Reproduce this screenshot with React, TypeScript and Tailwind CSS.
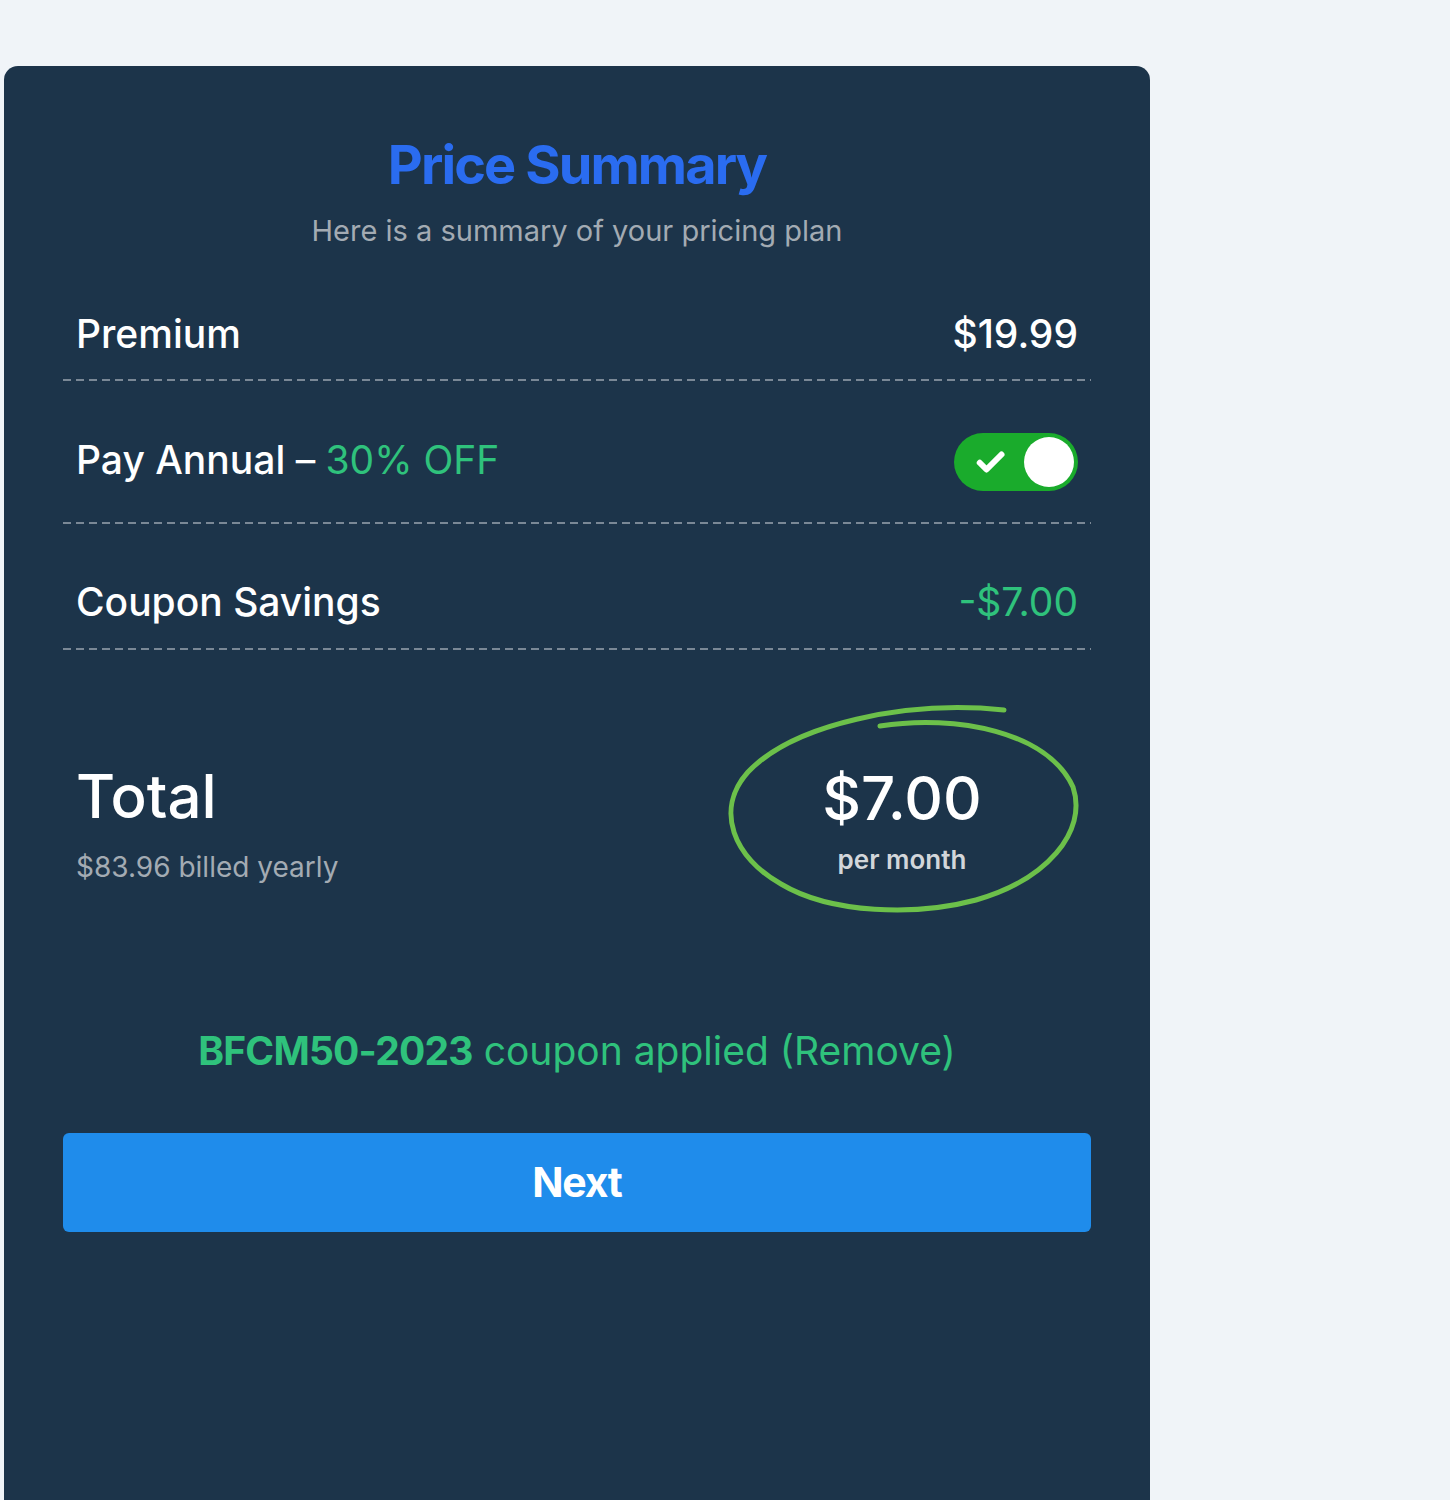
import React from "react";

function Divider() {
  return (
    <div className="h-[2px] w-full bg-[repeating-linear-gradient(90deg,#7a8896_0px,#7a8896_8px,transparent_8px,transparent_13px)]" />
  );
}

export default function App() {
  return (
    <div
      className="h-[1500px] w-full overflow-hidden bg-[#f0f4f8] pl-[4px] pt-[66px]"
      style={{ fontFamily: "Inter, 'Noto Sans', sans-serif" }}
    >
      <div className="flex h-[1460px] w-[1146px] flex-col rounded-[14px] bg-[#1c344a] px-[59px] pt-[69px]">
        <h1 className="text-center text-[54px] font-bold leading-[60px] tracking-[-0.035em] text-[#2a6cf0]">
          Price Summary
        </h1>
        <p className="mt-[18px] text-center text-[29px] leading-[36px] text-[#a3abb3]">
          Here is a summary of your pricing plan
        </p>

        <div className="flex items-center justify-between px-[13px] pb-[23px] pt-[63px] text-[39px] font-medium leading-[44px] text-white">
          <span>Premium</span>
          <span>$19.99</span>
        </div>
        <Divider />

        <div className="flex items-center justify-between px-[13px] pb-[31px] pt-[52px] text-[39px] font-medium leading-[44px] text-white">
          <span className="mt-[-4px]">
            Pay Annual <span className="font-normal">–</span>{" "}
            <span className="font-normal text-[#2fc27c]">30% OFF</span>
          </span>
          <div className="flex h-[58px] w-[124px] items-center justify-between rounded-full bg-[#1aab2c] pl-[19px] pr-[4px]">
            <svg width="36" height="36" viewBox="0 0 24 24" fill="none">
              <path
                d="M4.5 12.5l4.5 4.5 10-10"
                stroke="white"
                strokeWidth="4"
                strokeLinecap="round"
                strokeLinejoin="round"
              />
            </svg>
            <div className="h-[50px] w-[50px] rounded-full bg-white" />
          </div>
        </div>
        <Divider />

        <div className="flex items-center justify-between px-[13px] pb-[24px] pt-[56px] text-[39px] font-medium leading-[44px] text-white">
          <span>Coupon Savings</span>
          <span className="font-normal text-[#2fc27c]">-$7.00</span>
        </div>
        <Divider />

        <div className="mt-[52px] flex items-center justify-between px-[13px]">
          <div className="mt-[30px] flex flex-col">
            <span className="text-[60px] font-medium leading-[70px] text-white">Total</span>
            <span className="mt-[18px] text-[28px] leading-[36px] text-[#a3abb3]">
              $83.96 billed yearly
            </span>
          </div>
          <div className="relative flex h-[212px] w-[352px] flex-col items-center justify-center">
            <svg
              className="absolute left-0 top-0 overflow-visible"
              width="352"
              height="212"
              viewBox="0 0 352 212"
              fill="none"
            >
              <path
                d="M154 24 C230 12, 322 30, 347 85 C362 130, 320 178, 250 198 C190 214, 105 212, 55 182 C8 156, -12 108, 22 70 C68 22, 180 -2, 278 8"
                stroke="#6cc04a"
                strokeWidth="5"
                strokeLinecap="round"
                strokeLinejoin="round"
              />
            </svg>
            <span className="relative mt-[24px] text-[60px] font-medium leading-[68px] text-white">
              $7.00
            </span>
            <span className="relative mt-[12px] text-[26px] font-semibold leading-[32px] text-[#d2d6da]">
              per month
            </span>
          </div>
        </div>

        <p className="mt-[113px] text-center text-[39px] leading-[48px] text-[#2fc27c]">
          <span className="font-bold tracking-[-0.02em]">BFCM50-2023</span> coupon applied (Remove)
        </p>

        <button className="mt-[58px] flex h-[99px] w-full items-center justify-center rounded-[6px] bg-[#1f8ceb] text-[41px] font-bold tracking-[-0.03em] text-white">
          Next
        </button>
      </div>
    </div>
  );
}
